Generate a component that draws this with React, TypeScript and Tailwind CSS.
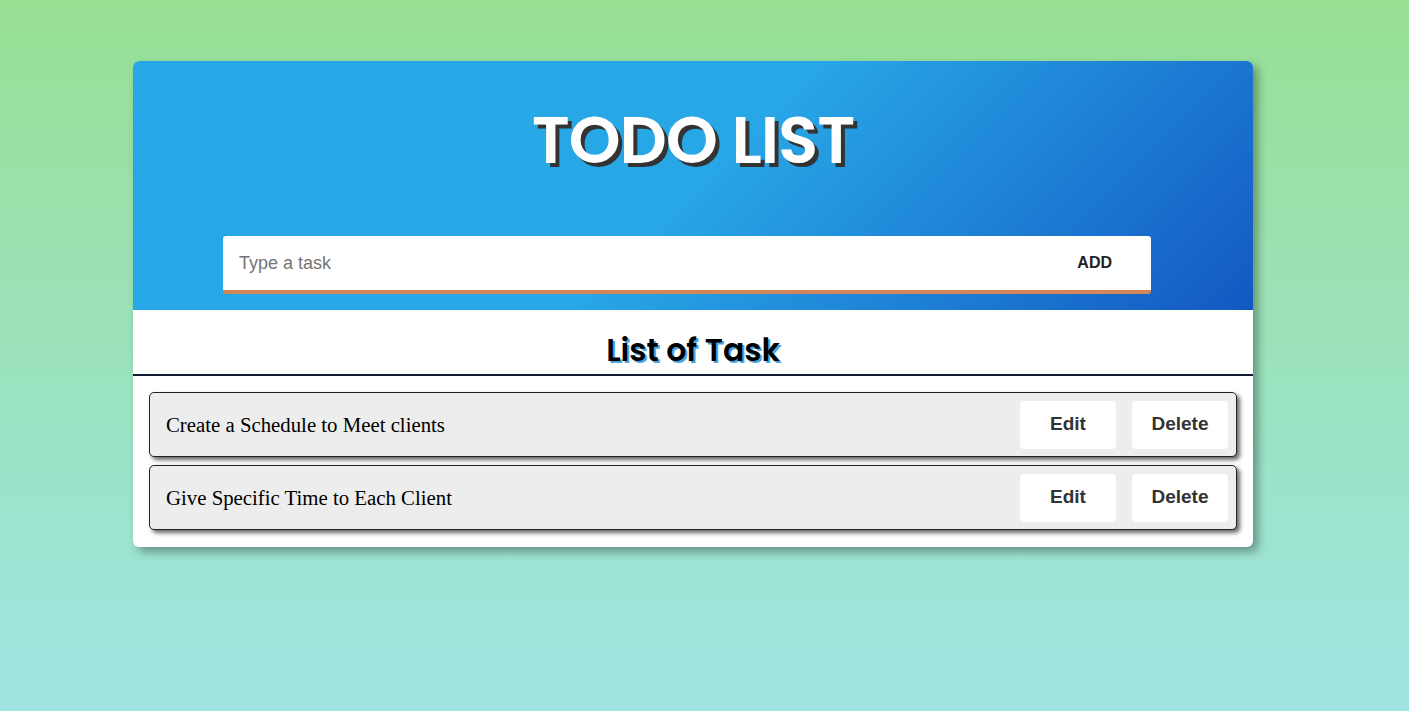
export default function App() {
  const tasks = ["Create a Schedule to Meet clients", "Give Specific Time to Each Client"]

  return (
    <div className="min-h-[711px] w-full bg-gradient-to-b from-[#97e093] to-[#a0e4e3] pt-[61px]">
      <div className="ml-[133px] w-[1120px] overflow-hidden rounded-md bg-white shadow-[5px_5px_10px_rgba(0,0,0,0.35)]">
        <div className="flex flex-col items-center bg-[linear-gradient(135deg,#28a7e7_0%,#28a7e7_50%,#1358c2_100%)] pb-4 pt-[44px]">
          <h1 className="font-['Poppins','Noto_Sans',sans-serif] text-[66px] font-semibold leading-[70px] tracking-[-1px] text-white [text-shadow:4px_4px_0_#333]">
            TODO LIST
          </h1>
          <div className="mr-[12px] mt-[61px] flex h-[58px] w-[928px] items-center rounded-[3px] border-b-4 border-[#d3865a] bg-white">
            <input
              placeholder="Type a task"
              className="h-full flex-1 bg-transparent pl-4 font-['Liberation_Sans',Arial,sans-serif] text-[18px] text-[#333] outline-none placeholder:text-[#757575]"
            />
            <button className="mr-[39px] font-['Liberation_Sans',Arial,sans-serif] text-[16px] font-bold text-[#222]">ADD</button>
          </div>
        </div>
        <div className="border-b-2 border-[#131b33] pb-[3px] pt-[19px] text-center">
          <h2 className="font-['Poppins','Noto_Sans',sans-serif] text-[31.5px] font-semibold leading-[42px] text-black [text-shadow:2px_2px_0_#4aa6df]">
            List of Task
          </h2>
        </div>
        <div className="flex flex-col gap-2 px-4 pb-[17px] pt-4">
          {tasks.map((t) => (
            <div
              key={t}
              className="flex h-[65px] items-center rounded-[5px] border border-[#222] bg-[#ededed] pl-4 pr-[8px] shadow-[3px_3px_4px_rgba(0,0,0,0.6)]"
            >
              <span className="flex-1 font-['Liberation_Serif','Times_New_Roman',serif] text-[20.8px] text-black">{t}</span>
              <div className="flex gap-4">
                <button className="h-[48px] w-[96px] rounded-[4px] bg-white font-['Liberation_Sans',Arial,sans-serif] text-[19px] font-bold text-[#333]">
                  Edit
                </button>
                <button className="h-[48px] w-[96px] rounded-[4px] bg-white font-['Liberation_Sans',Arial,sans-serif] text-[19px] font-bold text-[#333]">
                  Delete
                </button>
              </div>
            </div>
          ))}
        </div>
      </div>
    </div>
  )
}
